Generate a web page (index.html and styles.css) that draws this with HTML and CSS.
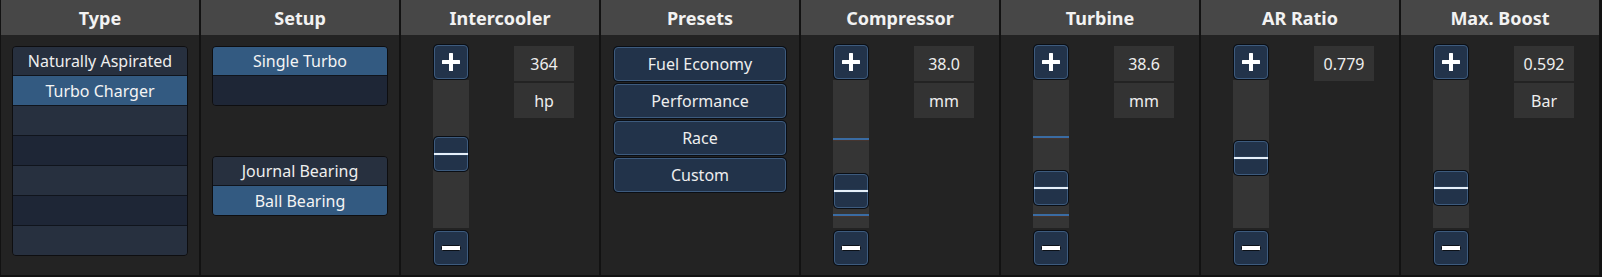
FILE: index.html
```html
<!DOCTYPE html>
<html>
<head>
<meta charset="utf-8">
<link rel="stylesheet" href="styles.css">
</head>
<body>
<div class="panel">
  <section class="col">
    <div class="col-head">Type</div>
    <div class="col-body">
      <div class="list">
        <div class="row odd">Naturally Aspirated</div>
        <div class="row sel">Turbo Charger</div>
        <div class="row odd"></div>
        <div class="row even"></div>
        <div class="row odd"></div>
        <div class="row even"></div>
        <div class="row odd"></div>
      </div>
    </div>
  </section>
  <section class="col">
    <div class="col-head">Setup</div>
    <div class="col-body setup">
      <div class="list">
        <div class="row sel">Single Turbo</div>
        <div class="row even"></div>
      </div>
      <div class="list">
        <div class="row odd">Journal Bearing</div>
        <div class="row sel">Ball Bearing</div>
      </div>
    </div>
  </section>
  <section class="col">
    <div class="col-head">Intercooler</div>
    <div class="col-body slider-body">
      <div class="slider">
        <div class="btn"><svg width="18" height="18" viewBox="0 0 18 18"><rect x="7" y="0" width="4" height="18" rx="0.5" fill="#fff"/><rect x="0" y="7" width="18" height="4" rx="0.5" fill="#fff"/></svg></div>
        <div class="track">
          <div class="thumb" style="top:57px"><div class="thumb-line"></div></div>
        </div>
        <div class="btn minus"><svg width="20" height="6" viewBox="0 0 20 6"><rect x="0.5" y="0.5" width="19" height="5" rx="1" fill="#fff" stroke="#0c1118"/></svg></div>
      </div>
      <div class="values">
        <div class="val">364</div>
        <div class="val">hp</div>
      </div>
    </div>
  </section>
  <section class="col">
    <div class="col-head">Presets</div>
    <div class="col-body presets">
      <div class="pbtn">Fuel Economy</div>
      <div class="pbtn">Performance</div>
      <div class="pbtn">Race</div>
      <div class="pbtn">Custom</div>
    </div>
  </section>
  <section class="col">
    <div class="col-head">Compressor</div>
    <div class="col-body slider-body">
      <div class="slider">
        <div class="btn"><svg width="18" height="18" viewBox="0 0 18 18"><rect x="7" y="0" width="4" height="18" rx="0.5" fill="#fff"/><rect x="0" y="7" width="18" height="4" rx="0.5" fill="#fff"/></svg></div>
        <div class="track">
          <div class="mark" style="top:58px"></div>
          <div class="mark" style="top:134px"></div>
          <div class="thumb" style="top:94px"><div class="thumb-line"></div></div>
        </div>
        <div class="btn minus"><svg width="20" height="6" viewBox="0 0 20 6"><rect x="0.5" y="0.5" width="19" height="5" rx="1" fill="#fff" stroke="#0c1118"/></svg></div>
      </div>
      <div class="values">
        <div class="val">38.0</div>
        <div class="val">mm</div>
      </div>
    </div>
  </section>
  <section class="col">
    <div class="col-head">Turbine</div>
    <div class="col-body slider-body">
      <div class="slider">
        <div class="btn"><svg width="18" height="18" viewBox="0 0 18 18"><rect x="7" y="0" width="4" height="18" rx="0.5" fill="#fff"/><rect x="0" y="7" width="18" height="4" rx="0.5" fill="#fff"/></svg></div>
        <div class="track">
          <div class="mark" style="top:56px"></div>
          <div class="mark" style="top:134px"></div>
          <div class="thumb" style="top:91px"><div class="thumb-line"></div></div>
        </div>
        <div class="btn minus"><svg width="20" height="6" viewBox="0 0 20 6"><rect x="0.5" y="0.5" width="19" height="5" rx="1" fill="#fff" stroke="#0c1118"/></svg></div>
      </div>
      <div class="values">
        <div class="val">38.6</div>
        <div class="val">mm</div>
      </div>
    </div>
  </section>
  <section class="col">
    <div class="col-head">AR Ratio</div>
    <div class="col-body slider-body">
      <div class="slider">
        <div class="btn"><svg width="18" height="18" viewBox="0 0 18 18"><rect x="7" y="0" width="4" height="18" rx="0.5" fill="#fff"/><rect x="0" y="7" width="18" height="4" rx="0.5" fill="#fff"/></svg></div>
        <div class="track">
          <div class="thumb" style="top:61px"><div class="thumb-line"></div></div>
        </div>
        <div class="btn minus"><svg width="20" height="6" viewBox="0 0 20 6"><rect x="0.5" y="0.5" width="19" height="5" rx="1" fill="#fff" stroke="#0c1118"/></svg></div>
      </div>
      <div class="values">
        <div class="val">0.779</div>
      </div>
    </div>
  </section>
  <section class="col">
    <div class="col-head">Max. Boost</div>
    <div class="col-body slider-body">
      <div class="slider">
        <div class="btn"><svg width="18" height="18" viewBox="0 0 18 18"><rect x="7" y="0" width="4" height="18" rx="0.5" fill="#fff"/><rect x="0" y="7" width="18" height="4" rx="0.5" fill="#fff"/></svg></div>
        <div class="track">
          <div class="thumb" style="top:91px"><div class="thumb-line"></div></div>
        </div>
        <div class="btn minus"><svg width="20" height="6" viewBox="0 0 20 6"><rect x="0.5" y="0.5" width="19" height="5" rx="1" fill="#fff" stroke="#0c1118"/></svg></div>
      </div>
      <div class="values">
        <div class="val">0.592</div>
        <div class="val">Bar</div>
      </div>
    </div>
  </section>
</div>
</body>
</html>
```

FILE: styles.css
```css
html, body {
  margin: 0;
  padding: 0;
  background: #121212;
  font-family: "Noto Sans", "DejaVu Sans", sans-serif;
  color: #e8e8e8;
}

.panel {
  display: flex;
  height: 275px;
  width: 1602px;
  background: #121212;
}

.col {
  width: 198px;
  margin: 0 1px;
  background: #232323;
  display: flex;
  flex-direction: column;
}

.col-head {
  height: 35px;
  background: #474747;
  display: flex;
  align-items: center;
  justify-content: center;
  font-size: 18px;
  font-weight: 700;
  color: #f2f2f2;
  flex-shrink: 0;
}

.col-body {
  flex: 1;
  padding: 11px 11px 0;
}

.list {
  border: 1px solid #0e0e10;
  border-radius: 4px;
  overflow: hidden;
  display: flex;
  flex-direction: column;
}

.row {
  height: 29px;
  display: flex;
  align-items: center;
  justify-content: center;
  font-size: 16px;
  color: #eeeeee;
  border-top: 1px solid #10141c;
}

.row:first-child {
  border-top: none;
  height: 28px;
}

.row.odd { background: #27303f; }
.row.even { background: #1e2636; }
.row.sel { background: #335a81; color: #f4f4f4; }

.setup {
  display: flex;
  flex-direction: column;
  gap: 50px;
}

/* sliders */
.slider-body {
  display: flex;
  padding: 10px 0 0 32px;
}

.slider {
  width: 36px;
  display: flex;
  flex-direction: column;
  align-items: center;
}

.btn {
  width: 32px;
  height: 32px;
  border: 1px solid #3d5b7e;
  box-shadow: 0 0 0 1px #0a0e14;
  border-radius: 4px;
  background: #22334a;
  display: flex;
  align-items: center;
  justify-content: center;
  flex-shrink: 0;
}

.btn.minus {
  margin-top: 3px;
}

.track {
  position: relative;
  width: 36px;
  height: 148px;
  margin-top: 1px;
  background: #353535;
}

.thumb {
  position: absolute;
  left: 1px;
  width: 32px;
  height: 32px;
  border: 1px solid #3d5b7e;
  box-shadow: 0 0 0 1px #0a0e14;
  border-radius: 4px;
  background: #22334a;
  display: flex;
  align-items: center;
}

.thumb-line {
  flex: 1;
  margin: 0 -1px;
  height: 2px;
  background: #e6f0fa;
  box-shadow: 0 0 1px #6f9ccc;
}

.mark {
  position: absolute;
  left: 0;
  right: 0;
  height: 2px;
  background: #3a6ca3;
  border-bottom: 1px solid #46352f;
}

.values {
  margin-left: 45px;
  padding-top: 1px;
  display: flex;
  flex-direction: column;
  gap: 2px;
}

.val {
  width: 60px;
  height: 35px;
  background: #333333;
  display: flex;
  align-items: center;
  justify-content: center;
  font-size: 16px;
  color: #eeeeee;
}

/* presets */
.presets {
  display: flex;
  flex-direction: column;
  gap: 3px;
  padding: 12px 13px 0;
}

.pbtn {
  height: 32px;
  border: 1px solid #3d5b7e;
  box-shadow: 0 0 0 1px #0a0e14;
  border-radius: 4px;
  background: #22334a;
  display: flex;
  align-items: center;
  justify-content: center;
  font-size: 16px;
  color: #eeeeee;
}
```
